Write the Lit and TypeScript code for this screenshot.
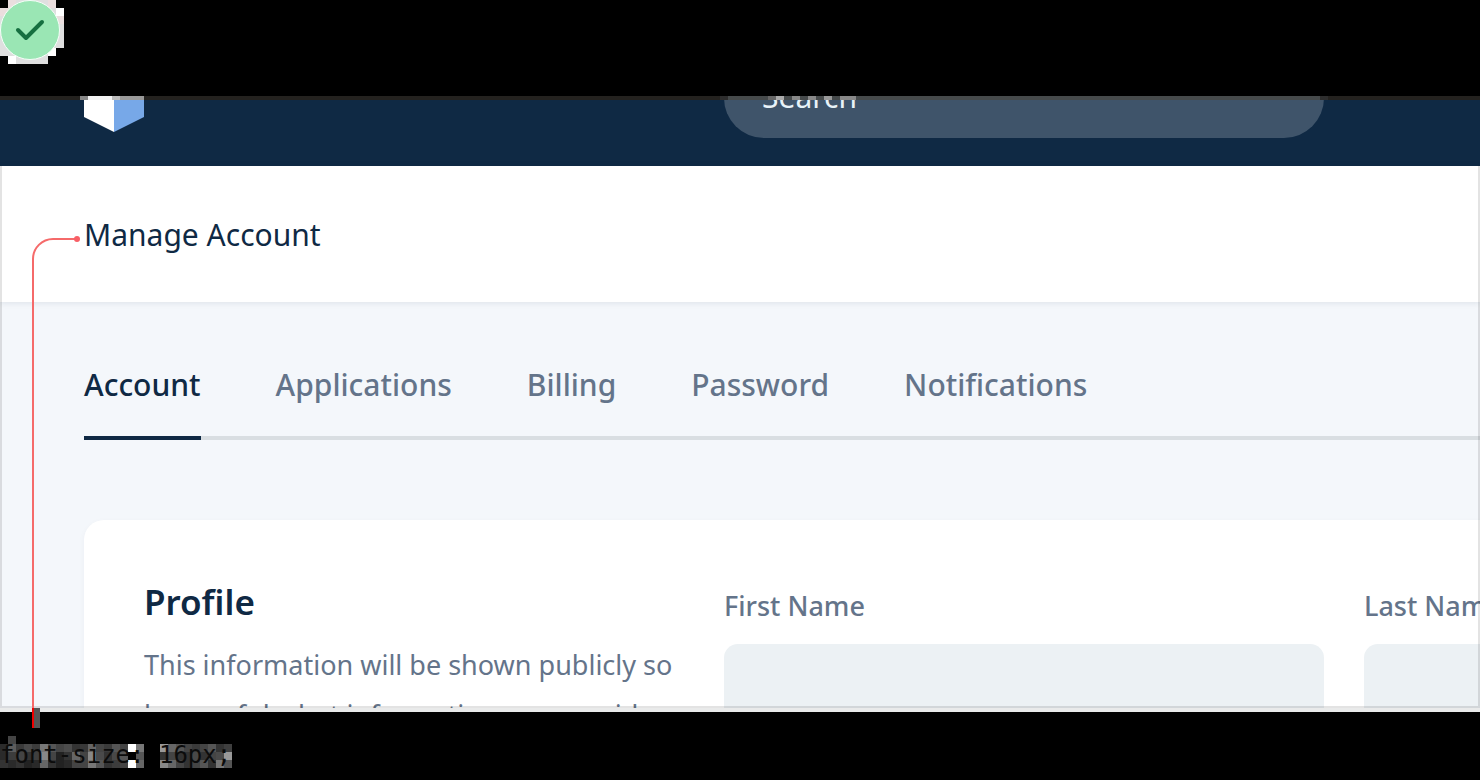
import { LitElement, html, css, svg } from "lit";
import { customElement } from "lit/decorators.js";

const TABS = ["Account", "Applications", "Billing", "Password", "Notifications"];

/* fills of the 8px mosaic tiles behind the code caption, one list per row */
const TOP = ["#2b2b2b", "#5c5c5c", "#3a3a3a", "#4a4a4a", "#3c3c3c", "#777", "#555", "#444", "#4c4c4c", "#333", "#383838", "#666", "#444", "#3a3a3a", "#555", "#444", "#fff", "#777", "", "", "#999", "#666", "#555", "#444", "#3a3a3a", "#444", "#555", "#333", "#3f3f3f"];
const MID = ["#2a2a2a", "#3c3c3c", "#444", "#333", "#3f3f3f", "#888", "#444", "#222", "#333", "#666", "#444", "#888", "#4a4a4a", "#333", "#484848", "#555", "#000", "#555", "", "", "#333", "#444", "#333", "#333", "#484848", "#333", "#444", "#4a4a4a", "#999"];
const LOW = ["#333", "#2a2a2a", "#333", "#222", "#292929", "#666", "#333", "#222", "#292929", "#444", "#444", "#777", "#555", "#333", "#3c3c3c", "#444", "#fff", "#666", "", "", "#888", "#666", "#444", "#333", "#444", "#555", "#333", "#777", "#555"];

/* x, width, fill of the pieces along the top edge of the window */
const EDGE: [number, number, string][] = [
  [80, 8, "#888"],
  [88, 24, "#f2f2f2"],
  [112, 8, "#bbb"],
  [120, 24, "#999"],
  [720, 8, "#2e2e2e"],
  [728, 592, "#464a4b"],
  [1320, 8, "#2e2e2e"],
  [768, 8, "#666"],
  [776, 8, "#aaa"],
  [792, 8, "#888"],
  [808, 8, "#888"],
  [824, 8, "#999"],
  [840, 16, "#888"],
];

@customElement("app-root")
export class AppRoot extends LitElement {
  static styles = css`
    :host {
      display: flex;
      flex-direction: column;
      position: relative;
      height: 100vh;
      overflow: hidden;
      background: #000;
      color: #0f2944;
      font-family: "Noto Sans", "Open Sans", sans-serif;
      font-size: 30px;
    }
    * {
      box-sizing: border-box;
    }
    h1,
    h2,
    p {
      margin: 0;
    }
    .status {
      flex: none;
      height: 96px;
    }
    .status svg {
      display: block;
    }
    .window {
      position: relative;
      flex: 1;
      min-height: 0;
      display: flex;
      flex-direction: column;
      overflow: hidden;
      background: #f4f7fb;
    }
    .window::before {
      content: "";
      position: absolute;
      inset: 0 0 auto;
      height: 4px;
      background: #24221f;
    }
    .frame {
      position: absolute;
      inset: 70px 0 4px;
      border: 2px solid rgba(0, 0, 0, 0.11);
      border-top: 0;
      pointer-events: none;
    }
    .frame-edge {
      position: absolute;
      inset: auto 0 0;
      height: 4px;
      background: #e9eaea;
    }
    .nav {
      flex: none;
      display: flex;
      align-items: flex-end;
      height: 70px;
      padding: 0 84px;
      background: #0f2944;
    }
    .logo {
      flex: none;
      display: block;
      margin-bottom: 34px;
    }
    .search {
      flex: none;
      width: 600px;
      height: 80px;
      margin: 0 0 28px 580px;
      padding: 0 38px 4px;
      border: 0;
      border-radius: 40px;
      background: #3f546a;
      color: #fff;
      font: inherit;
    }
    .search::placeholder {
      color: #e8f2f8;
      opacity: 1;
    }
    .title {
      flex: none;
      position: relative;
      display: flex;
      align-items: center;
      height: 136px;
      padding: 0 84px;
      background: #fff;
      box-shadow: 0 1px 6px rgba(16, 42, 67, 0.1);
    }
    .title h1 {
      font-size: 30px;
      font-weight: 400;
    }
    .tabs {
      flex: none;
      display: flex;
      gap: 75px;
      height: 138px;
      margin-left: 84px;
      border-bottom: 4px solid #d9dee2;
    }
    .tab {
      display: flex;
      align-items: center;
      padding-top: 30px;
      margin-bottom: -4px;
      border-bottom: 4px solid transparent;
      color: #64748a;
      font-weight: 500;
      text-decoration: none;
    }
    .tab.active {
      color: #0f2944;
      border-color: #0f2944;
    }
    .card {
      flex: none;
      display: grid;
      grid-template-columns: 540px 600px 600px;
      gap: 40px;
      width: max-content;
      margin: 80px 0 0 84px;
      padding: 60px;
      border-radius: 20px;
      background: #fff;
      box-shadow: 0 2px 6px rgba(16, 42, 67, 0.04);
    }
    h2 {
      font-size: 35px;
      font-weight: 600;
      line-height: 44px;
    }
    .intro {
      margin-top: 16px;
      color: #64748a;
      font-size: 27px;
      line-height: 50px;
    }
    .field {
      display: flex;
      flex-direction: column;
      gap: 12px;
      color: #64748a;
      font-size: 27px;
      font-weight: 500;
      line-height: 52px;
    }
    .field input {
      height: 90px;
      padding: 0 24px;
      border: 0;
      border-radius: 14px;
      background: #ecf1f4;
      font: inherit;
    }
    .caption {
      flex: none;
      position: relative;
      display: flex;
      align-items: center;
      height: 68px;
      padding-top: 18px;
      color: #0c0c0c;
      font: 24px "DejaVu Sans Mono", "Liberation Mono", monospace;
    }
    .tiles {
      position: absolute;
      left: 0;
      top: 0;
    }
    .caption code {
      position: relative;
      font: inherit;
    }
    .overlay {
      position: absolute;
      left: 0;
      top: 0;
      pointer-events: none;
    }
  `;

  private tiles(row: string[], y: number) {
    return row.map((fill, i) => (fill ? svg`<rect x=${i * 8} y=${y} width="8" height="8" fill=${fill} />` : null));
  }

  render() {
    return html`
      <header class="status">
        <svg width="64" height="64" viewBox="0 0 64 64" role="img" aria-label="Correct">
          <path shape-rendering="crispEdges" fill="#dfdfdf" d="M8 0H56V8H64V48H56V56H48V64H8V56H0V8H8Z" />
          <path shape-rendering="crispEdges" fill="#fff" d="M56 8h8v8h-8zM8 56h8v8H8zM48 48h8v8h-8z" />
          <path shape-rendering="crispEdges" fill="#eadede" d="M8 0h8v8H8zM0 8h8v8H0zM48 0h8v8h-8zM56 16h8v8h-8z" />
          <circle cx="30" cy="30" r="29.5" fill="#9ae6b4" stroke="#f4fff8" />
          <path d="M18 30l8 8 16-16" fill="none" stroke="#166f40" stroke-width="4" stroke-linecap="round" stroke-linejoin="round" />
        </svg>
      </header>

      <main class="window">
        <nav class="nav">
          <svg class="logo" width="60" height="68" viewBox="0 0 60 68" aria-hidden="true">
            <path d="M30 0L0 15v38l30 15z" fill="#fff" />
            <path d="M30 0l30 15v38L30 68z" fill="#77a8e8" />
          </svg>
          <input class="search" type="search" placeholder="Search" aria-label="Search" />
        </nav>
        <div class="title"><h1>Manage Account</h1></div>
        <div class="tabs">
          ${TABS.map((t, i) => html`<a class="tab ${i === 0 ? "active" : ""}" href="#">${t}</a>`)}
        </div>
        <section class="card">
          <div>
            <h2>Profile</h2>
            <p class="intro">This information will be shown publicly so be careful what information you provide.</p>
          </div>
          <label class="field">First Name<input type="text" /></label>
          <label class="field">Last Name<input type="text" /></label>
        </section>
        <div class="frame"></div>
        <div class="frame-edge"></div>
      </main>

      <footer class="caption">
        <svg class="tiles" width="240" height="68" shape-rendering="crispEdges" aria-hidden="true">
          <rect x="8" y="24" width="8" height="8" fill="#444" />
          ${this.tiles(TOP, 32)}${this.tiles(MID, 40)}${this.tiles(LOW, 48)}
        </svg>
        <code>font-size: 16px;</code>
      </footer>

      <svg class="overlay" width="1340" height="730" aria-hidden="true">
        ${EDGE.map(([x, w, fill]) => svg`<rect x=${x} y="96" width=${w} height="4" fill=${fill} />`)}
        <path d="M34 708h6v20h-6z" fill="#555" />
        <path d="M77 239H53a20 20 0 0 0-20 20V712" fill="none" stroke="#f56a6a" stroke-width="2" />
        <path d="M32 708h2v20h-2z" fill="#f00000" />
        <circle cx="77" cy="239" r="3" fill="#f85f66" />
      </svg>
    `;
  }
}
